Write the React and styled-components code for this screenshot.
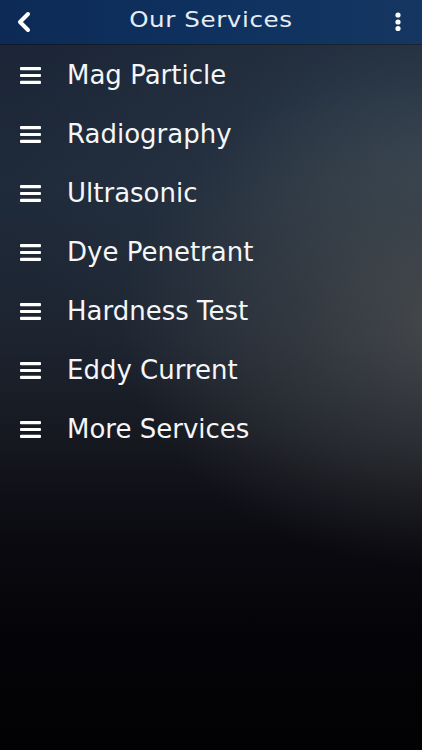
import React from "react";
import styled, { createGlobalStyle } from "styled-components";

const Global = createGlobalStyle`
  html, body { margin: 0; padding: 0; background: #05050a; }
  #root { width: 422px; height: 750px; }
`;

const Screen = styled.div`
  width: 422px;
  height: 750px;
  overflow: hidden;
  display: flex;
  flex-direction: column;
  font-family: "DejaVu Sans", Verdana, sans-serif;
  color: #fff;
  background:
    radial-gradient(ellipse 330px 250px at 450px 320px, rgba(80, 80, 80, 0.75) 0%, rgba(70, 72, 74, 0.45) 45%, rgba(50, 55, 60, 0) 100%),
    radial-gradient(ellipse 420px 320px at 430px 170px, rgba(60, 78, 90, 0.7) 0%, rgba(50, 65, 78, 0.3) 50%, rgba(40, 50, 60, 0) 100%),
    linear-gradient(180deg, #1a2436 0%, #1f2a3a 25%, #1d2430 45%, #15171e 60%, #0a0a10 72%, #040408 85%, #020204 100%);
`;

const Header = styled.header`
  height: 44px;
  flex: none;
  display: flex;
  align-items: center;
  justify-content: space-between;
  padding: 0 12px 0 12px;
  background: linear-gradient(90deg, #0c2a55 0%, #0f3160 50%, #143660 100%);
  box-shadow: 0 1px 0 rgba(0,0,0,0.3);
`;

const IconButton = styled.div`
  width: 24px;
  height: 44px;
  display: flex;
  align-items: center;
  justify-content: center;
`;

const Title = styled.h1`
  margin: 0;
  font-family: "DejaVu Sans", sans-serif;
  font-weight: 400;
  font-size: 21px;
  letter-spacing: 0.5px;
  transform: scaleX(1.17);
  color: #e6ecf4;
  margin-top: -5px;
  margin-left: 0;
`;

const List = styled.ul`
  list-style: none;
  margin: 0;
  padding: 2px 0 0 0;
  display: flex;
  flex-direction: column;
`;

const Row = styled.li`
  height: 59px;
  display: flex;
  align-items: center;
  padding-left: 20px;
  gap: 26px;
`;

const Label = styled.span`
  font-size: 26px;
  line-height: 1;
  color: #f4f6f8;
  margin-top: -2px;
`;

const Burger = () => (
  <svg width="21" height="17" viewBox="0 0 21 17">
    <rect x="0" y="0" width="21" height="3.2" rx="1" fill="#fff" />
    <rect x="0" y="6.9" width="21" height="3.2" rx="1" fill="#fff" />
    <rect x="0" y="13.8" width="21" height="3.2" rx="1" fill="#fff" />
  </svg>
);

const items = [
  "Mag Particle",
  "Radiography",
  "Ultrasonic",
  "Dye Penetrant",
  "Hardness Test",
  "Eddy Current",
  "More Services",
];

export default function App() {
  return (
    <>
      <Global />
      <Screen>
        <Header>
          <IconButton>
            <svg width="16" height="22" viewBox="0 0 16 22">
              <path d="M12 3 L4 11 L12 19" fill="none" stroke="#fff" strokeWidth="4" strokeLinecap="round" strokeLinejoin="round" />
            </svg>
          </IconButton>
          <Title>Our Services</Title>
          <IconButton>
            <svg width="8" height="22" viewBox="0 0 8 22">
              <circle cx="4" cy="4" r="2.6" fill="#fff" />
              <circle cx="4" cy="11" r="2.6" fill="#fff" />
              <circle cx="4" cy="17.5" r="2.6" fill="#fff" />
            </svg>
          </IconButton>
        </Header>
        <List>
          {items.map((t) => (
            <Row key={t}>
              <Burger />
              <Label>{t}</Label>
            </Row>
          ))}
        </List>
      </Screen>
    </>
  );
}
